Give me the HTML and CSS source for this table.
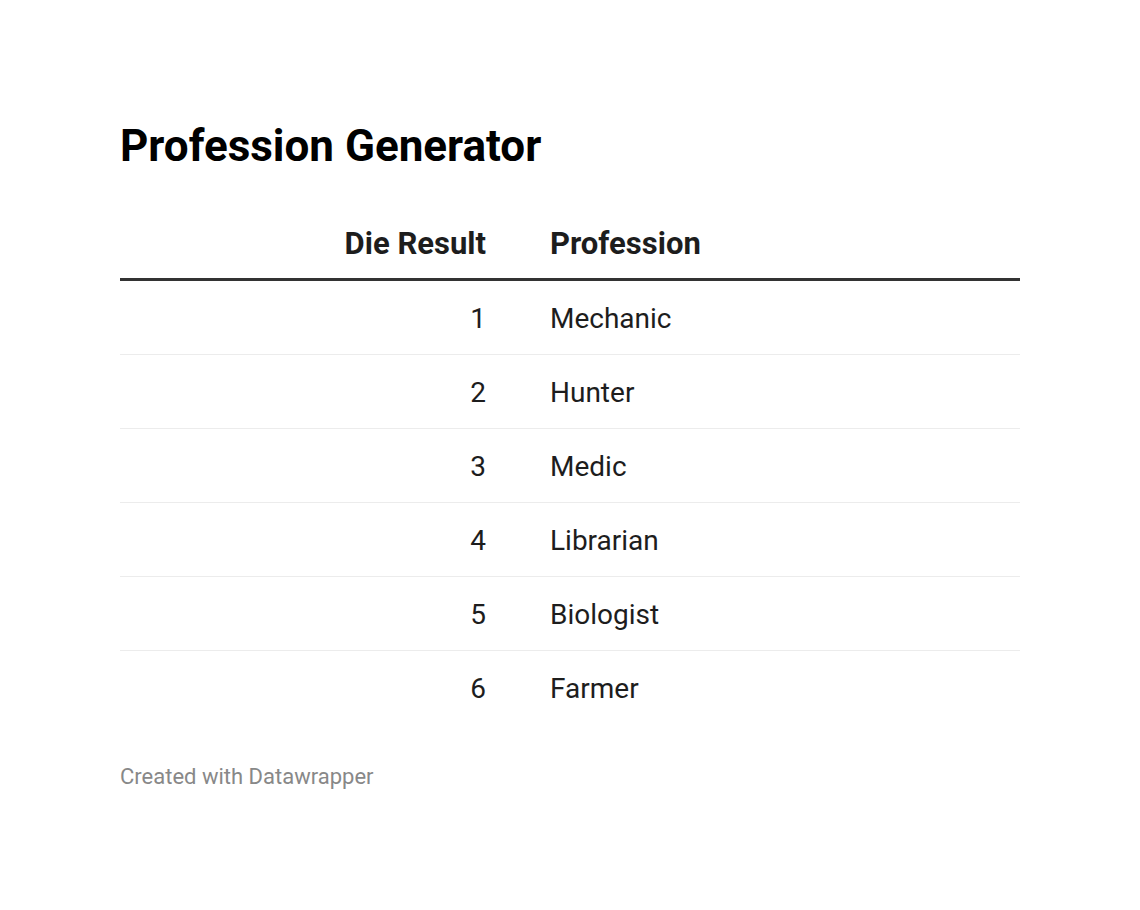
FILE: index.html
```html
<!DOCTYPE html>
<html>
<head>
<meta charset="utf-8">
<link rel="stylesheet" href="styles.css">
</head>
<body>
<div class="chart">
  <h1 class="title">Profession Generator</h1>
  <div class="table">
    <div class="row head">
      <div class="c1">Die Result</div>
      <div class="c2">Profession</div>
    </div>
    <div class="row"><div class="c1">1</div><div class="c2">Mechanic</div></div>
    <div class="row"><div class="c1">2</div><div class="c2">Hunter</div></div>
    <div class="row"><div class="c1">3</div><div class="c2">Medic</div></div>
    <div class="row"><div class="c1">4</div><div class="c2">Librarian</div></div>
    <div class="row"><div class="c1">5</div><div class="c2">Biologist</div></div>
    <div class="row last"><div class="c1">6</div><div class="c2">Farmer</div></div>
  </div>
  <div class="footer">Created with Datawrapper</div>
</div>
</body>
</html>
```
FILE: styles.css
```css
html, body {
  margin: 0;
  padding: 0;
  background: #fff;
}
body {
  font-family: Roboto, "Liberation Sans", sans-serif;
  color: #1d1d1d;
}
.chart {
  width: 900px;
  padding: 121px 120px 0 120px;
}
.title {
  margin: 0;
  font-size: 44px;
  line-height: 50px;
  font-weight: 700;
  color: #000;
}
.table {
  margin-top: 55px;
}
.row {
  display: grid;
  grid-template-columns: 366px 1fr;
  column-gap: 64px;
  font-size: 28px;
  line-height: 32px;
  padding: 22px 0 19px 0;
  border-bottom: 1px solid #ececec;
}
.row.head {
  font-size: 31px;
  line-height: 36px;
  font-weight: 700;
  padding: 0 0 16px 0;
  border-bottom: 3px solid #333;
}
.row.last {
  border-bottom: none;
}
.c1 {
  text-align: right;
}
.footer {
  margin-top: 40px;
  font-size: 22px;
  line-height: 26px;
  color: #888;
}
```
